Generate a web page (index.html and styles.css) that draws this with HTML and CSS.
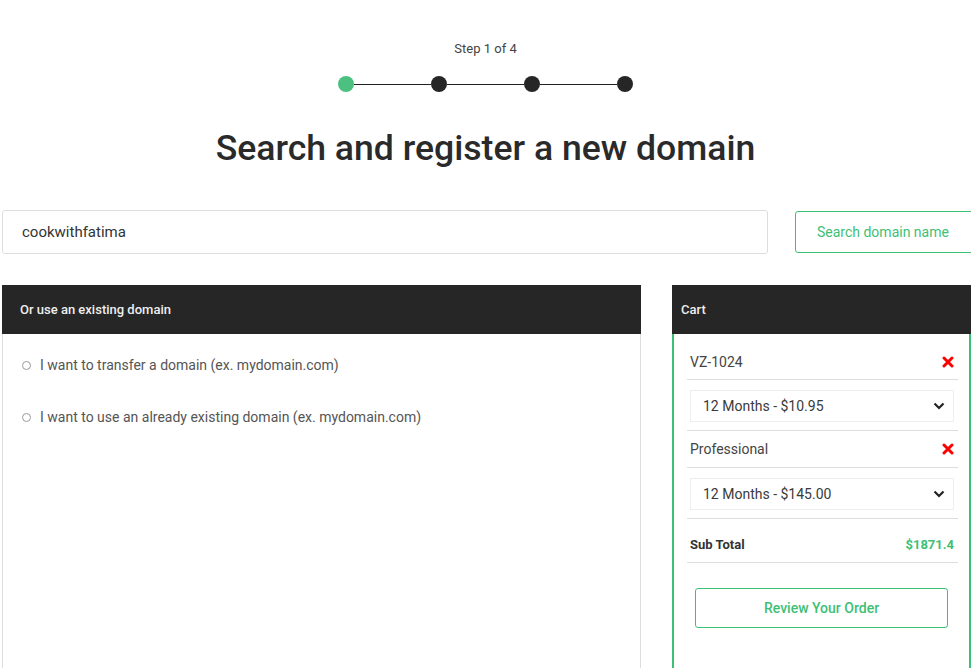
FILE: index.html
```html
<!DOCTYPE html>
<html lang="en">
<head>
    <meta charset="UTF-8">
    <meta name="viewport" content="width=device-width, initial-scale=1.0">
    <title>Register a domain</title>
    <link rel="stylesheet" href="styles.css">
</head>
<body>

<header class="steps">
    <div class="step-label">Step 1 of 4</div>
    <div class="stepper">
        <span class="dot done"></span>
        <span class="line"></span>
        <span class="dot"></span>
        <span class="line"></span>
        <span class="dot"></span>
        <span class="line"></span>
        <span class="dot"></span>
    </div>
    <h1>Search and register a new domain</h1>
</header>

<main class="page">
    <form class="search" onsubmit="return false">
        <input type="text" class="search-input" value="cookwithfatima">
        <button type="submit" class="search-btn">Search domain name</button>
    </form>

    <div class="columns">
        <section class="panel">
            <div class="panel-head">Or use an existing domain</div>
            <div class="panel-body">
                <label class="option"><span class="radio"></span>I want to transfer a domain (ex. mydomain.com)</label>
                <label class="option"><span class="radio"></span>I want to use an already existing domain (ex. mydomain.com)</label>
            </div>
        </section>

        <aside class="cart">
            <div class="panel-head">Cart</div>
            <div class="cart-body">
                <div class="cart-row first">
                    <span>VZ-1024</span>
                    <svg class="remove" width="12" height="12" viewBox="0 0 12 12"><path d="M2 2L10 10M10 2L2 10" stroke="#f00" stroke-width="3" stroke-linecap="round"/></svg>
                </div>
                <div class="cart-select-row">
                    <div class="cart-select">
                        <span>12 Months - $10.95</span>
                        <svg width="12" height="8" viewBox="0 0 12 8"><path d="M1.5 1.5L6 6L10.5 1.5" fill="none" stroke="#222" stroke-width="2.2"/></svg>
                    </div>
                </div>
                <div class="cart-row">
                    <span>Professional</span>
                    <svg class="remove" width="12" height="12" viewBox="0 0 12 12"><path d="M2 2L10 10M10 2L2 10" stroke="#f00" stroke-width="3" stroke-linecap="round"/></svg>
                </div>
                <div class="cart-select-row">
                    <div class="cart-select">
                        <span>12 Months - $145.00</span>
                        <svg width="12" height="8" viewBox="0 0 12 8"><path d="M1.5 1.5L6 6L10.5 1.5" fill="none" stroke="#222" stroke-width="2.2"/></svg>
                    </div>
                </div>
                <div class="cart-row total">
                    <span>Sub Total</span>
                    <span class="amount">$1871.4</span>
                </div>
                <button class="review-btn">Review Your Order</button>
            </div>
        </aside>
    </div>
</main>

</body>
</html>
```

FILE: styles.css
```css
html, body {
    overflow: hidden;
}
body {
    font-family: 'Roboto', 'Liberation Sans', sans-serif;
    margin: 0;
    padding: 0;
    background: #fff;
    color: #333;
}
.steps {
    text-align: center;
    padding-top: 41px;
}
.step-label {
    font-size: 13px;
    line-height: 16px;
    color: #444;
}
.stepper {
    display: flex;
    align-items: center;
    justify-content: center;
    margin-top: 19px;
}
.dot {
    width: 16px;
    height: 16px;
    border-radius: 50%;
    background: #262626;
}
.dot.done {
    background: #4cc17f;
}
.line {
    width: 77px;
    height: 1px;
    background: #222;
}
h1 {
    font-size: 35.6px;
    font-weight: 500;
    line-height: 44px;
    color: #2a2a2a;
    margin: 34px 0 0;
}
.page {
    width: 1000px;
    padding-left: 2px;
    margin-top: 40px;
}
.search {
    display: flex;
    align-items: center;
    gap: 27px;
}
.search-input {
    width: 766px;
    height: 44px;
    box-sizing: border-box;
    border: 1px solid #ddd;
    border-radius: 3px;
    padding: 0 19px;
    font-family: inherit;
    font-size: 15px;
    color: #333;
    outline: none;
}
.search-btn {
    width: 190px;
    height: 42px;
    background: #fff;
    border: 1px solid #3dbf76;
    border-radius: 3px;
    color: #3dbf76;
    font-family: inherit;
    font-size: 14px;
    text-align: left;
    padding: 0 21px;
}
.columns {
    display: flex;
    gap: 31px;
    margin-top: 31px;
}
.panel {
    width: 639px;
}
.panel-head {
    background: #262626;
    color: #eee;
    font-size: 13px;
    font-weight: 500;
    height: 49px;
    line-height: 49px;
    padding: 0 18px;
}
.cart .panel-head {
    padding: 0 9px;
}
.panel-body {
    border-left: 1px solid #ddd;
    border-right: 1px solid #ddd;
    min-height: 400px;
    padding: 21px 20px 0;
    display: flex;
    flex-direction: column;
    gap: 32px;
}
.option {
    display: flex;
    align-items: center;
    font-size: 14px;
    line-height: 20px;
    color: #555;
}
.radio {
    width: 7px;
    height: 7px;
    border: 1px solid #999;
    border-radius: 50%;
    margin-right: 9px;
    margin-left: -1px;
}
.cart {
    width: 299px;
}
.cart-body {
    border: 2px solid #3dbf76;
    border-top: none;
    min-height: 400px;
    padding: 10px 11px 0 13px;
}
.cart-row {
    display: flex;
    justify-content: space-between;
    align-items: center;
    height: 36px;
    padding: 0 4px 0 3px;
    font-size: 14px;
    color: #444;
    border-bottom: 1px solid #ddd;
}
.cart-row.first {
    height: 35px;
}
.cart-row.total {
    height: 35px;
    margin-top: 8px;
    font-size: 13px;
    font-weight: 700;
    color: #333;
}
.amount {
    color: #3dbf76;
}
.cart-select-row {
    padding: 10px 4px 8px 3px;
    border-bottom: 1px solid #ddd;
}
.cart-select {
    display: flex;
    justify-content: space-between;
    align-items: center;
    height: 30px;
    border: 1px solid #eee;
    padding: 0 8px 0 12px;
    font-size: 14px;
    color: #3a3a3a;
}
.review-btn {
    display: block;
    width: 253px;
    height: 40px;
    margin: 25px 0 0 8px;
    background: #fff;
    border: 1px solid #3dbf76;
    border-radius: 3px;
    color: #3dbf76;
    font-family: inherit;
    font-size: 14px;
    font-weight: 500;
}
```
